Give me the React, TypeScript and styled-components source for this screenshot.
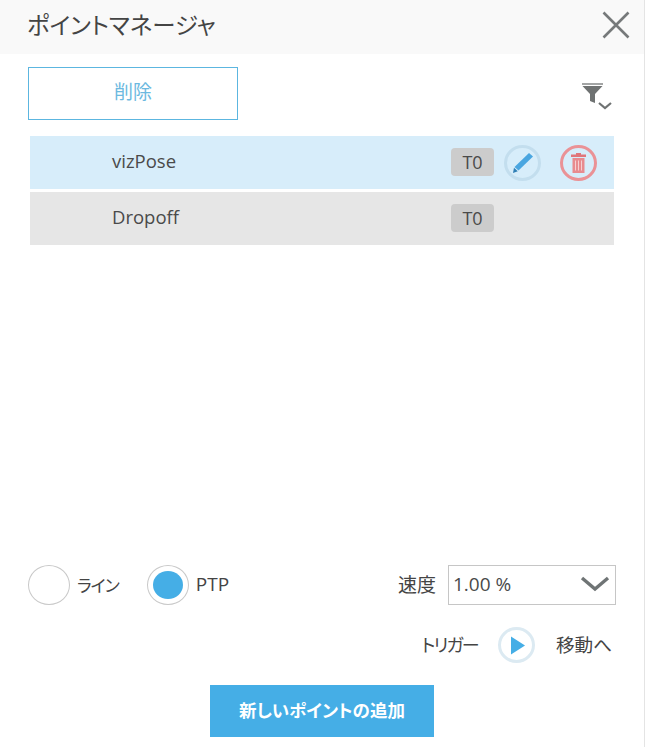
import styled, { createGlobalStyle } from "styled-components";

const GlobalStyle = createGlobalStyle`
  html, body {
    margin: 0;
    padding: 0;
    background: #fff;
  }
  body {
    font-family: "Open Sans", "Noto Sans CJK JP", sans-serif;
    font-feature-settings: "palt";
    color: #444;
  }
  button {
    font-feature-settings: inherit;
  }
`;

const Panel = styled.div`
  width: 645px;
  height: 747px;
  box-sizing: border-box;
  border-right: 1px solid #e4e4e4;
  display: flex;
  flex-direction: column;
  overflow: hidden;
`;

const Header = styled.header`
  height: 54px;
  flex: none;
  background: #f9f9f9;
  display: flex;
  align-items: center;
  justify-content: space-between;
  padding: 0 13px 4px 27px;
  box-sizing: border-box;
`;

const Title = styled.h1`
  margin: 0 0 3px;
  font-size: 23.4px;
  font-weight: 400;
  color: #444;
`;

const CloseButton = styled.button`
  border: none;
  background: none;
  padding: 0;
  width: 30px;
  height: 30px;
  display: flex;
`;

const Toolbar = styled.div`
  display: flex;
  align-items: center;
  justify-content: space-between;
  padding: 13px 30px 0 28px;
`;

const OutlineButton = styled.button`
  width: 210px;
  height: 53px;
  box-sizing: border-box;
  border: 1px solid #5cb6e0;
  background: #fff;
  color: #6cb9e0;
  font-family: inherit;
  font-size: 19px;
  padding: 0 0 6px;
`;

const FilterButton = styled.button`
  border: none;
  background: none;
  padding: 0;
  width: 34px;
  height: 34px;
  display: flex;
  margin-top: 2px;
`;

const PointList = styled.ul`
  list-style: none;
  margin: 16px 0 0;
  padding: 0 30px;
  display: flex;
  flex-direction: column;
  gap: 3px;
`;

const PointRow = styled.li<{ $selected?: boolean }>`
  height: 53px;
  box-sizing: border-box;
  display: flex;
  align-items: center;
  padding: 0 17px 0 82px;
  background: ${(p) => (p.$selected ? "#d7edfa" : "#e6e6e6")};
  font-size: 18.5px;
  color: #4a4a4a;
`;

const PointName = styled.span`
  flex: 1;
  margin-bottom: 4px;
`;

const ToolBadge = styled.span`
  width: 43px;
  height: 28px;
  margin: 0 10px 1px 0;
  border-radius: 4px;
  background: #cccccc;
  display: flex;
  align-items: center;
  justify-content: center;
  font-size: 18px;
  color: #4a4a4a;
`;

const RowActions = styled.div`
  width: 93px;
  display: flex;
  align-items: center;
  justify-content: space-between;
`;

const RoundAction = styled.button<{ $tone: string }>`
  width: 37px;
  height: 36px;
  box-sizing: border-box;
  border-radius: 50%;
  border: 3px solid ${(p) => p.$tone};
  background: transparent;
  padding: 0;
  display: flex;
  align-items: center;
  justify-content: center;
`;

const Spacer = styled.div`
  flex: 1;
`;

const OptionsRow = styled.div`
  display: flex;
  align-items: center;
  justify-content: space-between;
  padding: 0 28px;
`;

const RadioGroup = styled.div`
  display: flex;
  align-items: center;
`;

const RadioCircle = styled.span<{ $checked?: boolean }>`
  width: 42px;
  height: 40px;
  box-sizing: border-box;
  border-radius: 50%;
  border: 1px solid #c9c9c9;
  padding: 5px;
  display: flex;
  &::after {
    content: "";
    flex: 1;
    border-radius: 50%;
    background: ${(p) => (p.$checked ? "#45aee6" : "transparent")};
  }
`;

const RadioLabel = styled.span<{ $size: number; $tight?: number }>`
  font-size: ${(p) => p.$size}px;
  letter-spacing: ${(p) => p.$tight ?? 0}px;
  color: #444;
  margin: 0 28px 2px 7px;
`;

const SpeedGroup = styled.div`
  display: flex;
  align-items: center;
`;

const SpeedLabel = styled.span`
  font-size: 19px;
  color: #444;
  margin: 0 12px 2px 0;
`;

const SpeedSelect = styled.div`
  width: 168px;
  height: 40px;
  box-sizing: border-box;
  border: 1px solid #c6c6c6;
  display: flex;
  align-items: center;
  justify-content: space-between;
  padding: 0 5px 2px 4px;
  font-size: 19px;
  color: #4a4a4a;
`;

const TriggerRow = styled.div`
  display: flex;
  align-items: center;
  justify-content: flex-end;
  padding: 22px 32px 0 0;
`;

const TriggerText = styled.span<{ $size: number; $tight?: number }>`
  font-size: ${(p) => p.$size}px;
  letter-spacing: ${(p) => p.$tight ?? 0}px;
  color: #444;
  margin-bottom: 3px;
`;

const PlayButton = styled.button`
  width: 37px;
  height: 36px;
  box-sizing: border-box;
  border-radius: 50%;
  border: 3px solid #dceaf2;
  background: #fff;
  padding: 0 0 0 3px;
  margin: 0 21px 0 20px;
  display: flex;
  align-items: center;
  justify-content: center;
`;

const Footer = styled.div`
  display: flex;
  justify-content: center;
  padding: 22px 0 10px;
`;

const PrimaryButton = styled.button`
  width: 224px;
  height: 52px;
  border: none;
  background: #45aee6;
  color: #fff;
  font-family: inherit;
  font-size: 17.5px;
  font-weight: 700;
  padding: 0 0 4px;
`;

const points = [
  { name: "vizPose", tool: "T0", selected: true },
  { name: "Dropoff", tool: "T0", selected: false },
];

const App = () => {
  return (
    <Panel>
      <GlobalStyle />
      <Header>
        <Title>ポイントマネージャ</Title>
        <CloseButton aria-label="閉じる">
          <svg width="30" height="30" viewBox="0 0 30 30">
            <path d="M2.5 2.5 27.5 27.5M27.5 2.5 2.5 27.5" stroke="#76797a" strokeWidth="2.6" fill="none" />
          </svg>
        </CloseButton>
      </Header>

      <Toolbar>
        <OutlineButton>削除</OutlineButton>
        <FilterButton aria-label="フィルター">
          <svg width="34" height="34" viewBox="0 0 34 34">
            <path d="M2 5h21v2H2z" fill="#a3a5a5" />
            <path d="M2.5 8h20L15 16v9l-5-2v-7z" fill="#6f7272" />
            <path d="M19 25l6 5 6-5" stroke="#6f7272" strokeWidth="2.2" fill="none" />
          </svg>
        </FilterButton>
      </Toolbar>

      <PointList>
        {points.map((point) => (
          <PointRow key={point.name} $selected={point.selected}>
            <PointName>{point.name}</PointName>
            <ToolBadge>{point.tool}</ToolBadge>
            <RowActions>
              {point.selected && (
                <>
                  <RoundAction $tone="#c3deee" aria-label="編集">
                    <svg width="24" height="22" viewBox="0 0 24 22">
                      <path d="M18 1l4 3.5L7.5 18.5l-4-3.5z" fill="#4aa6e0" />
                      <path d="M3 15.8l3.8 3.4L2 21z" fill="#2f7fb5" />
                    </svg>
                  </RoundAction>
                  <RoundAction $tone="#ea9296" aria-label="ゴミ箱">
                    <svg width="15" height="20" viewBox="0 0 15 20">
                      <path d="M5 0h5v1.5h5V4H0V1.5h5z" fill="#e0767b" />
                      <path d="M1.5 5h12v15h-12z" fill="#e88b8f" />
                      <path d="M4.5 7.5v10M7.5 7.5v10M10.5 7.5v10" stroke="#f6cfd2" strokeWidth="1" />
                    </svg>
                  </RoundAction>
                </>
              )}
            </RowActions>
          </PointRow>
        ))}
      </PointList>

      <Spacer />

      <OptionsRow>
        <RadioGroup>
          <RadioCircle />
          <RadioLabel $size={17} $tight={-1}>ライン</RadioLabel>
          <RadioCircle $checked />
          <RadioLabel $size={19}>PTP</RadioLabel>
        </RadioGroup>
        <SpeedGroup>
          <SpeedLabel>速度</SpeedLabel>
          <SpeedSelect>
            <span>1.00 %</span>
            <svg width="30" height="18" viewBox="0 0 30 18">
              <path d="M2 3l13 11L28 3" stroke="#6f7475" strokeWidth="3.4" fill="none" />
            </svg>
          </SpeedSelect>
        </SpeedGroup>
      </OptionsRow>

      <TriggerRow>
        <TriggerText $size={18} $tight={-1.75}>トリガー</TriggerText>
        <PlayButton aria-label="再生">
          <svg width="16" height="19" viewBox="0 0 16 19">
            <path d="M1 0.5l14 9-14 9z" fill="#45aee6" />
          </svg>
        </PlayButton>
        <TriggerText $size={18.6}>移動へ</TriggerText>
      </TriggerRow>

      <Footer>
        <PrimaryButton>新しいポイントの追加</PrimaryButton>
      </Footer>
    </Panel>
  );
};

export default App;
